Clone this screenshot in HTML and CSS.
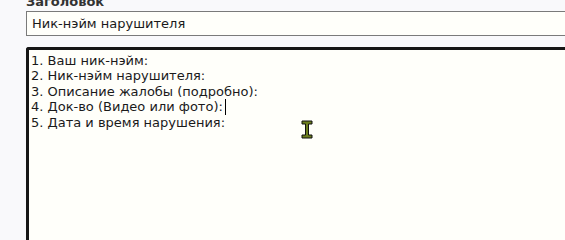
FILE: index.html
```html
<!DOCTYPE html>
<html lang="ru">
<head>
<meta charset="utf-8">
<title>Жалоба</title>
<link rel="stylesheet" href="styles.css">
</head>
<body>
<div class="form">
  <label class="label">Заголовок</label>
  <div class="input">Ник-нэйм нарушителя</div>
  <div class="textarea" role="textbox">
    <div class="line">1. Ваш ник-нэйм:</div>
    <div class="line">2. Ник-нэйм нарушителя:</div>
    <div class="line">3. Описание жалобы (подробно):</div>
    <div class="line">4. Док-во (Видео или фото):<span class="caret"></span></div>
    <div class="line">5. Дата и время нарушения:</div>
  </div>
</div>
<svg class="ibeam" width="12" height="19" viewBox="0 0 12 19">
  <path d="M1 1 H11 V4 H7.5 V15 H11 V18 H1 V15 H4.5 V4 H1 Z" fill="#6b7d1e" stroke="#111" stroke-width="1"/>
</svg>
</body>
</html>
```
FILE: styles.css
```css
html, body {
  margin: 0;
  padding: 0;
  background: #f9f9fb;
  height: 100%;
  overflow: hidden;
}
.form {
  padding-left: 26px;
  font-family: "DejaVu Sans", Verdana, sans-serif;
  font-size: 13px;
  color: #1a1a1a;
}
.label {
  display: block;
  font-weight: bold;
  color: #333;
  height: 11px;
  line-height: 11px;
  margin-top: -4px;
  margin-bottom: 4px;
}
.input {
  box-sizing: border-box;
  height: 25px;
  border: 1px solid #7a7a7a;
  border-right: 0;
  background: #fffffa;
  padding: 0 5px;
  line-height: 23px;
  white-space: nowrap;
}
.textarea {
  box-sizing: border-box;
  margin-top: 11px;
  height: 200px;
  border: 3px solid #161616;
  border-right: 0;
  border-radius: 3px 0 0 3px;
  background: #fffffa;
  padding: 3px 2px;
  line-height: 15.4px;
}
.line {
  white-space: nowrap;
}
.caret {
  display: inline-block;
  width: 1px;
  height: 16px;
  background: #000;
  vertical-align: -4px;
  margin-left: 2px;
}
.ibeam {
  position: absolute;
  left: 301px;
  top: 120px;
}
```
